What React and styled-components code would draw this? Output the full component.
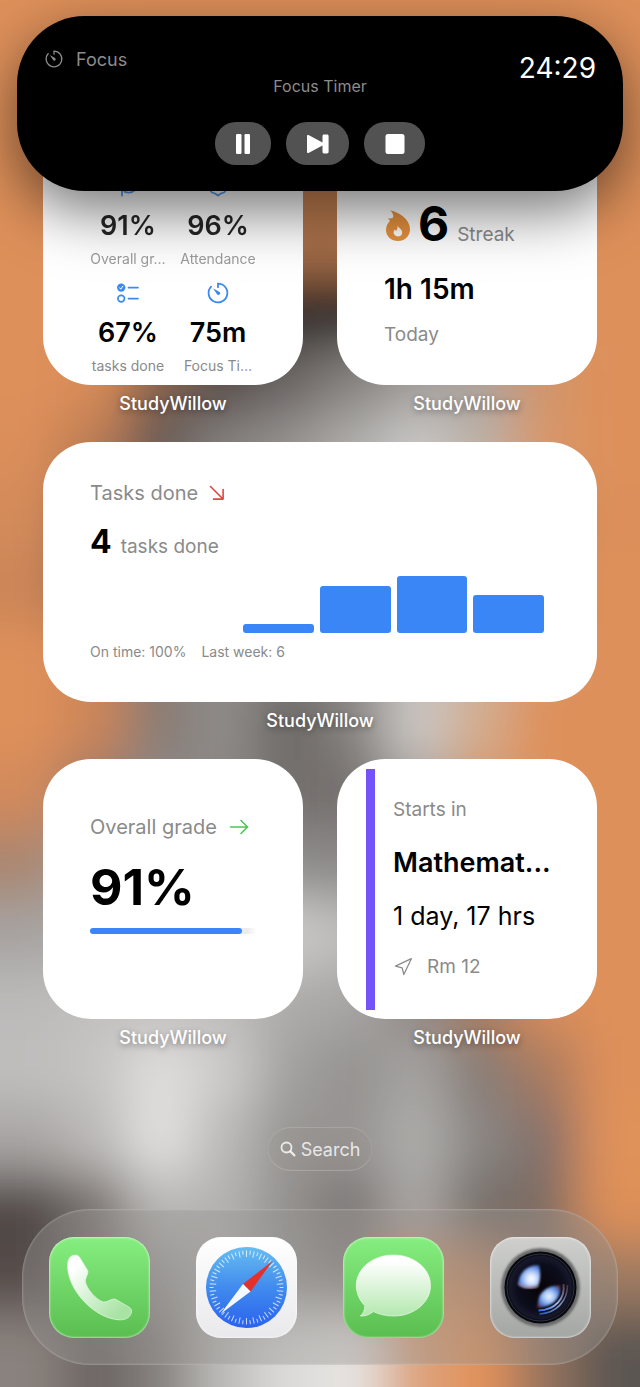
import React from 'react'
import styled, { createGlobalStyle } from 'styled-components'
import { Navigation } from 'lucide-react'

const GlobalStyle = createGlobalStyle`
  * {
    box-sizing: border-box;
  }
  body {
    margin: 0;
    background-color: #de905a;
    font-family: Inter, 'Liberation Sans', sans-serif;
  }
  button {
    font-family: inherit;
    border: none;
    padding: 0;
    cursor: pointer;
  }
  p, h1, h2 {
    margin: 0;
    font-weight: 400;
  }
`

/* ---------- wallpaper ---------- */

const WallpaperSvg = styled.svg`
  position: absolute;
  z-index: -1;
  top: 0;
  left: 0;
  width: 100%;
  height: 100%;
`

const O = '#de905a'

// coarse colour mesh, ten cells a row, from y = 208 down
const mesh = [
  [O, O, O, O, '#a87049', '#a87049', O, O, O, O],
  [O, O, O, '#6b5040', '#2c2725', '#2c2725', '#6b5a50', O, O, O],
  [O, '#d88c58', '#7d5f4e', '#544c49', '#6a6563', '#85827f', '#a19e9c', '#a8a19b', '#d0956a', O],
  ['#da8e5a', '#b87a54', '#645a55', '#85817f', '#969391', '#b0aeac', '#cbc9c7', '#bdb2a8', '#d8976a', O],
  ['#d48b5a', '#6d564a', '#77716e', '#8f8c8a', '#969391', '#a9a6a4', '#bdbab7', '#b5a090', '#c98a5c', '#dc8f5a'],
  ['#cb8558', '#735a4c', '#77716e', '#8f8c8a', '#8a8785', '#a9a6a4', '#bdbab7', '#b5a090', '#d48c5a', '#de905a'],
  [O, '#cd8658', '#857a73', '#8f8c8a', '#7a7674', '#8c8987', '#c3c0bd', '#c9b09c', '#da9260', O],
  [O, '#cb8558', '#887b73', '#8f8c8a', '#6c6765', '#85827f', '#cbc8c5', '#d3ac8c', O, O],
  ['#d28a5c', '#94786a', '#8c8987', '#8a8785', '#726e6c', '#74706e', '#a19e9c', '#d39a72', O, O],
  ['#a98670', '#a5a2a0', '#a5a2a0', '#9a9796', '#8f8d8c', '#8a8785', '#a8a6a5', '#c89a78', O, O],
  ['#a5a2a0', '#b0aeac', '#bcbab9', '#c5c4c3', '#cccbca', '#bdbcbb', '#a8a6a4', '#b08c74', O, O],
  ['#bcbab9', '#c2c0bf', '#c0bebd', '#bcbbba', '#adabaa', '#a8a6a5', '#8d8581', '#a87a5c', '#d88e5c', O],
  ['#c0bebd', '#c6c4c3', '#dfdedd', '#cdcccb', '#a3a1a0', '#949290', '#a5a3a1', '#857c76', '#a87a5e', O],
  ['#a9a6a4', '#bcb9b8', '#e2e1e0', '#bbb9b8', '#979492', '#969392', '#afadab', '#8a8683', '#82706a', '#e0925a'],
  ['#4f4744', '#77716e', '#b9b7b5', '#b4b2b1', '#93908e', '#7a7674', '#a9a6a4', '#736d69', '#7c6c62', '#de9058'],
  ['#544c49', '#77716e', '#9d9a98', '#b4b2b1', '#9a9795', '#8c8784', '#d0956a', '#c08a66', '#827066', '#9c7a62'],
  ['#8a827e', '#6b6460', '#85817f', '#bdbbb9', '#dddbd9', '#e6e4e2', '#dba27a', '#e3935a', '#94735f', '#5c5653'],
]

const Wallpaper = () => (
  <WallpaperSvg viewBox="0 0 640 1387" preserveAspectRatio="none" aria-hidden="true">
    <defs>
      <filter id="soft" filterUnits="userSpaceOnUse" x="-200" y="0" width="1040" height="1700">
        <feGaussianBlur stdDeviation="25" />
      </filter>
    </defs>
    <rect width="640" height="1387" fill={O} />
    <g filter="url(#soft)">
      {mesh.map((row, r) =>
        row.map((fill, c) => (
          <rect
            key={`${r}-${c}`}
            x={c === 0 ? -130 : c * 64}
            y={208 + r * 69}
            width={c === 0 || c === 9 ? 195 : 65}
            height={r === mesh.length - 1 ? 200 : 70}
            fill={fill}
          />
        ))
      )}
    </g>
  </WallpaperSvg>
)

/* ---------- icons ---------- */

const TimerIcon = ({ size = 24, width = 1.8 }) => (
  <svg width={size} height={size} viewBox="0 0 24 24" fill="none" stroke="currentColor" strokeWidth={width} strokeLinecap="round">
    <path d="M12 6.2V2.600a9.400 9.400 0 1 1-6.900 3" />
    <path d="M7 7.200l6.100 3.500a1.700 1.700 0 1 1-2.300 2.300z" fill="currentColor" stroke="none" />
  </svg>
)

const ChecklistIcon = () => (
  <svg width="24" height="24" viewBox="0 0 24 24" fill="none" stroke="currentColor" strokeWidth="1.7" strokeLinecap="round">
    <circle cx="5.2" cy="6.6" r="4.2" fill="currentColor" stroke="none" />
    <path d="M3.6 6.8l1.200 1.400 2-3" stroke="#fff" strokeWidth="1" />
    <circle cx="5.2" cy="17.6" r="3.3" />
    <path d="M12.500 6.600h9.500M12.500 17.600h9.500" />
  </svg>
)

const CapIcon = () => (
  <svg width="24" height="24" viewBox="0 0 24 24" fill="none" stroke="currentColor" strokeWidth="1.8" strokeLinecap="round" strokeLinejoin="round">
    <path d="M12 3l11 5-11 6L1 8zM6 11v10.500M8.500 17.600c3 1.400 7 1.300 10-1.100v-5" />
  </svg>
)

const SealIcon = () => (
  <svg width="24" height="24" viewBox="0 0 24 24" fill="none" stroke="currentColor" strokeWidth="1.8" strokeLinecap="round" strokeLinejoin="round">
    <path d="M12 2l3 1.500 4 .5 1.500 4L22 12l-1.500 3.500L18 18.500 15 19.500 12 21.500 9 19.500 6 18.500 3.500 15.500 2 12l1.500-4L5 4l4-.5z" />
    <path d="M8 12l3 3 5-6" />
  </svg>
)

const FlameIcon = () => (
  <svg width="26" height="31" viewBox="-2 0 26 31">
    <path
      d="M4.300.6C13 2 24 9.500 24 19.200 24 26.200 18.600 31 12 31S0 26.400 0 20c0-4 1.800-6.800 4-9.200L1.600 8.200c2 .4 4 .2 5.600-.8C7.600 5 6.600 2.600 4.300.6z"
      fill="#e8923e"
    />
    <path d="M11.600 15.600c.4 2.200 4.600 3.600 4.600 6.900 0 2.500-1.900 4-4.300 4s-4.300-1.600-4.300-3.900c0-1.400.6-2.400 1.200-3.200.5.8 1 1.200 1.600 1.400.8-1.500 1.300-3.300 1.200-5.200z" fill="#fff" />
  </svg>
)

const TrendDown = () => (
  <svg width="16" height="16" viewBox="0 0 16 16" fill="none" stroke="#e5443f" strokeWidth="1.6" strokeLinecap="round" strokeLinejoin="round">
    <path d="M1.500 1.500l12.500 12.500M14.100 4.500v9.600H4.500" />
  </svg>
)

const TrendFlat = () => (
  <svg width="20" height="16" viewBox="0 0 20 16" fill="none" stroke="#52c455" strokeWidth="1.6" strokeLinecap="round" strokeLinejoin="round">
    <path d="M1.500 8h16.800M12 1.500L18.500 8 12 14.500" />
  </svg>
)

const PauseIcon = () => (
  <svg width="16" height="20" viewBox="0 0 16 20" fill="#fff">
    <rect x="1" width="5.500" height="20" rx="1.200" />
    <rect x="9.500" width="5.500" height="20" rx="1.200" />
  </svg>
)

const SkipIcon = () => (
  <svg width="24" height="20" viewBox="0 0 24 20" fill="#fff">
    <path d="M1 2.200C1 .9 2 .6 3 1.200L16.500 8.600V2.200C16.500 1.200 17 .6 18 .6H21c1 0 1.600.6 1.600 1.600v15.600c0 1-.6 1.600-1.600 1.600h-3c-1 0-1.500-.6-1.500-1.600v-6.400L3 18.800c-1 .6-2 .3-2-1z" />
  </svg>
)

const StopIcon = () => (
  <svg width="20" height="20" viewBox="0 0 20 20" fill="#fff">
    <rect x=".5" width="19" height="20" rx="2.500" />
  </svg>
)

const SearchIcon = () => (
  <svg width="16" height="16" viewBox="0 0 16 16" fill="none" stroke="currentColor" strokeWidth="1.800" strokeLinecap="round">
    <circle cx="6.500" cy="6.500" r="5" />
    <path d="M10.400 10.400l4 4" strokeWidth="2.200" />
  </svg>
)

/* ---------- live activity ---------- */

const Island = styled.section`
  position: absolute;
  z-index: 2;
  top: 16px;
  left: 17px;
  right: 17px;
  padding: 32px 27px 26px;
  border-radius: 68px;
  background-color: #000;
  color: #8c8c8c;
  box-shadow: 0 20px 60px rgba(0, 0, 0, 0.55);
`
const IslandHeader = styled.header`
  display: grid;
  grid-template-columns: 1fr auto 1fr;
  height: 48px;
`
const Activity = styled.p`
  display: flex;
  align-items: center;
  gap: 12px;
  height: 22px;
  font-size: 18px;
`
const ActivityTitle = styled.h1`
  align-self: end;
  font-size: 16px;
  line-height: 20px;
`
const Clock = styled.time`
  justify-self: end;
  color: #fff;
  font-size: 28px;
  line-height: 40px;
`
const Controls = styled.div`
  display: flex;
  justify-content: center;
  gap: 15px;
  margin-top: 26px;
`
const ControlButton = styled.button`
  display: flex;
  align-items: center;
  justify-content: center;
  width: ${(props) => props.$width}px;
  height: 43px;
  border-radius: 21px;
  background-color: #525252;
`

/* ---------- widgets ---------- */

const Screen = styled.main`
  position: relative;
  z-index: 0;
  display: flex;
  flex-direction: column;
  min-height: 100vh;
  padding: 125px 22px 22px;
  overflow: hidden;
`
const Widgets = styled.div`
  display: grid;
  grid-template-columns: 1fr 1fr;
  gap: 27px 34px;
  padding: 0 21px;
`
const Slot = styled.article`
  grid-column: ${(props) => (props.$wide ? 'span 2' : 'auto')};
  min-width: 0;
`
const Card = styled.div`
  display: flex;
  flex-direction: column;
  height: 260px;
  padding: ${(props) => props.$pad};
  border-radius: 48px;
  background-color: #fff;
  color: #000;
`
const AppName = styled.p`
  margin-top: 8px;
  color: #fff;
  font-size: 18px;
  font-weight: 500;
  line-height: 22px;
  text-align: center;
  text-shadow: 0 2px 6px rgba(0, 0, 0, 0.4);
`
const Stats = styled.div`
  display: grid;
  grid-template-columns: 1fr 1fr;
  gap: 13px 14px;
`
const Stat = styled.div`
  display: flex;
  flex-direction: column;
  align-items: center;
  color: #3c8af0;
  white-space: nowrap;
  opacity: ${(props) => (props.$dim ? 0.85 : 1)};
`
const StatValue = styled.p`
  margin: 11px 0 7px;
  color: #000;
  font-size: 27px;
  font-weight: 600;
  line-height: 34px;
`
const Caption = styled.p`
  color: #8a8a8a;
  font-size: 14px;
  line-height: 18px;
`
const Line = styled.div`
  display: flex;
  align-items: ${(props) => props.$align || 'baseline'};
  gap: ${(props) => props.$gap}px;
`
const Muted = styled.p`
  color: #8a8a8a;
  font-size: ${(props) => props.$size || 19}px;
  line-height: 24px;
  white-space: nowrap;
`
const Strong = styled.p`
  font-size: ${(props) => props.$size}px;
  font-weight: ${(props) => props.$weight || 600};
  line-height: ${(props) => props.$line || 34}px;
  white-space: nowrap;
`
const StreakLine = styled(Line)`
  margin-bottom: 18px;
`
const DayTotal = styled(Strong)`
  margin-bottom: 17px;
`
const CountLine = styled(Line)`
  margin-top: 13px;
`
const Chart = styled.div`
  display: flex;
  align-items: flex-end;
  gap: 6px;
  height: 57px;
  margin: 10px 6px 10px 0;
`
const Bar = styled.div`
  flex: 1;
  border-radius: 3px;
  background-color: #3b86f7;
`
const GradeValue = styled(Strong)`
  margin: 18px 0 11px;
`
const Progress = styled.div`
  height: 6px;
  border-radius: 3px;
  background: linear-gradient(to right, #ececec 94%, #fff);
`
const ProgressFill = styled.div`
  height: 100%;
  border-radius: 3px;
  background-color: #3b86f7;
`
const Lesson = styled.div`
  display: flex;
  gap: 18px;
  height: 241px;
`
const SubjectMark = styled.div`
  flex: 0 0 9px;
  background-color: #7551f8;
`
const LessonInfo = styled.div`
  display: flex;
  flex-direction: column;
  padding-top: 29px;
`
const LessonName = styled(Strong)`
  margin: 24px 0 19px;
`
const Place = styled(Line)`
  margin-top: 22px;
  color: #8a8a8a;
`

const Widget = ({ wide, pad, children }) => (
  <Slot $wide={wide}>
    <Card $pad={pad}>{children}</Card>
    <AppName>StudyWillow</AppName>
  </Slot>
)

const stats = [
  { icon: <CapIcon />, value: '91%', label: 'Overall gr…', dim: true },
  { icon: <SealIcon />, value: '96%', label: 'Attendance', dim: true },
  { icon: <ChecklistIcon />, value: '67%', label: 'tasks done' },
  { icon: <TimerIcon />, value: '75m', label: 'Focus Ti…' },
]

const weeks = [0, 0, 1, 5, 6, 4]

/* ---------- search and dock ---------- */

const SearchButton = styled.button`
  display: flex;
  align-items: center;
  justify-content: center;
  align-self: center;
  gap: 5px;
  width: 104px;
  height: 44px;
  margin-top: 78px;
  border-radius: 22px;
  background-color: rgba(150, 145, 142, 0.2);
  box-shadow: inset 0 1px 1px rgba(255, 255, 255, 0.18), inset 0 -1px 1px rgba(255, 255, 255, 0.22);
  color: rgba(255, 255, 255, 0.8);
  font-size: 18px;
`
const Dock = styled.nav`
  display: flex;
  justify-content: space-between;
  margin-top: 38px;
  padding: 28px 27px 27px;
  border-radius: 68px;
  background-color: rgba(150, 147, 145, 0.4);
  box-shadow: inset 0 0 2px 1px rgba(255, 255, 255, 0.22);
`
const AppButton = styled.button`
  width: 101px;
  height: 101px;
  overflow: hidden;
  border-radius: 25px;
  background: ${(props) => props.$fill};
  box-shadow: inset 0 0 2px 1px rgba(255, 255, 255, 0.5);

  svg {
    display: block;
  }
`

const PhoneGlyph = () => (
  <svg width="101" height="101" viewBox="0 0 101 101">
    <defs>
      <linearGradient id="handset" x1="0" y1="0" x2="1" y2="1">
        <stop offset=".15" stopColor="#fff" />
        <stop offset=".85" stopColor="#a9e3a4" />
      </linearGradient>
    </defs>
    <path
      d="M18.600 30c-.3-5 1-9.500 4.400-11.200 2.600-1.200 5.600-1 7.400 1.200l8.200 13.400c1.400 3.200-2.400 6.400-2.200 11 .3 6.200 11.400 19.400 18.200 20.600 4.200.4 8.400-4.200 12.200-2.600l13.600 8c3 2 2.600 5.600.6 8.200-2.400 3.400-6.400 4.400-11 4.200C45.500 81.400 19.600 54 18.600 30z"
      fill="url(#handset)"
      stroke="#e6fbe4"
      strokeOpacity=".7"
    />
  </svg>
)

const CompassGlyph = () => (
  <svg width="101" height="101" viewBox="0 0 101 101">
    <defs>
      <linearGradient id="dial" x1="0" y1="0" x2="0" y2="1">
        <stop offset="0" stopColor="#66bdf0" />
        <stop offset=".5" stopColor="#418bee" />
        <stop offset="1" stopColor="#2a62ee" />
      </linearGradient>
    </defs>
    <circle cx="50.500" cy="50.500" r="40.500" fill="url(#dial)" />
    {Array.from({ length: 60 }, (_, i) => (
      <path
        key={i}
        d={i % 2 ? 'M50.500 13.500v4' : 'M50.500 13.500v6.500'}
        stroke="#fff"
        strokeOpacity=".75"
        transform={`rotate(${i * 6} 50.500 50.500)`}
      />
    ))}
    <path d="M76.500 24L47 47l7.500 7.500z" fill="#e5312c" />
    <path d="M24.500 77L47 47l7.500 7.500z" fill="#f4f8ff" />
  </svg>
)

const BubbleGlyph = () => (
  <svg width="101" height="101" viewBox="0 0 101 101">
    <defs>
      <linearGradient id="bubble" x1="0" y1="0" x2="0" y2="1">
        <stop offset=".1" stopColor="#fff" />
        <stop offset="1" stopColor="#b4e8af" />
      </linearGradient>
    </defs>
    <path
      d="M50.400 18C71 18 87.500 31.500 87.500 48.500S71 79 50.400 79c-7.400 0-14-1.600-20-4.400C26.500 77.500 22 79.500 17.400 79c3-2.600 4.600-6.200 4.400-10.400C16.500 63.200 13.300 56.200 13.300 48.500 13.300 31.500 29.800 18 50.400 18z"
      fill="url(#bubble)"
      stroke="#effcee"
      strokeOpacity=".7"
    />
  </svg>
)

const LensGlyph = () => (
  <svg width="101" height="101" viewBox="0 0 101 101">
    <defs>
      <radialGradient id="glass">
        <stop offset="0" stopColor="#080507" />
        <stop offset=".7" stopColor="#0c0d1c" />
        <stop offset=".92" stopColor="#17192b" />
        <stop offset="1" stopColor="#05060c" />
      </radialGradient>
      <radialGradient id="glintTop" cx=".6" cy=".6" r=".65">
        <stop offset="0" stopColor="#fff" />
        <stop offset=".35" stopColor="#cfe0ff" />
        <stop offset=".75" stopColor="#6e97e6" />
        <stop offset="1" stopColor="#3557a8" />
      </radialGradient>
      <radialGradient id="glintLow" cx=".5" cy=".5" r=".6">
        <stop offset="0" stopColor="#f0f4ff" />
        <stop offset=".4" stopColor="#a6c6f8" />
        <stop offset=".8" stopColor="#4a78d0" />
        <stop offset="1" stopColor="#6a3a44" />
      </radialGradient>
      <linearGradient id="ring" x1="0" y1="1" x2="1" y2="0">
        <stop offset="0" stopColor="#2f6ae0" />
        <stop offset=".5" stopColor="#9fb8ec" />
        <stop offset="1" stopColor="#5a3a44" />
      </linearGradient>
      <filter id="glow" x="-30%" y="-30%" width="160%" height="160%">
        <feGaussianBlur stdDeviation="1" />
      </filter>
    </defs>
    <circle cx="50.500" cy="50.500" r="39.500" fill="#6a6b6a" filter="url(#glow)" />
    <circle cx="50.500" cy="50.500" r="36" fill="#06070c" />
    <circle cx="50.500" cy="50.500" r="33.500" fill="url(#glass)" stroke="#3a3d4c" strokeWidth=".8" />
    <path d="M49 28C38 28 30 34 28 46.500c3 5 13 6 20 2.500 2.500-5 3-13 1-21z" fill="url(#glintTop)" filter="url(#glow)" />
    <path d="M28.500 46.500c4 4 13 5 19.500 2.500" fill="none" stroke="#b98a90" strokeWidth="1.600" filter="url(#glow)" />
    <path d="M70 48.500c2 12-7 22-22.500 22 .5-6 1-12 5-15.500 4-4 9-7 17.500-6.500z" fill="url(#glintLow)" filter="url(#glow)" />
    <path d="M73.500 47c2 14-8 26-25 26.500" fill="none" stroke="url(#ring)" strokeWidth="2" />
    <path d="M77.500 48c0 16-11 28-28 29" fill="none" stroke="url(#ring)" strokeWidth="1.600" strokeOpacity=".8" />
  </svg>
)

const green = 'linear-gradient(#86ee80, #5abd50)'

const apps = [
  { name: 'Phone', fill: green, glyph: <PhoneGlyph /> },
  { name: 'Safari', fill: 'linear-gradient(#fff, #e9e9ec)', glyph: <CompassGlyph /> },
  { name: 'Messages', fill: green, glyph: <BubbleGlyph /> },
  { name: 'Camera', fill: 'linear-gradient(#cfd0ce, #a4a6a4)', glyph: <LensGlyph /> },
]

const App = () => {
  return (
    <Screen>
      <GlobalStyle />
      <Wallpaper />
      <Island>
        <IslandHeader>
          <Activity>
            <TimerIcon size={20} width={1.5} />
            Focus
          </Activity>
          <ActivityTitle>Focus Timer</ActivityTitle>
          <Clock>24:29</Clock>
        </IslandHeader>
        <Controls>
          <ControlButton $width={56} aria-label="Pause">
            <PauseIcon />
          </ControlButton>
          <ControlButton $width={63} aria-label="Skip">
            <SkipIcon />
          </ControlButton>
          <ControlButton $width={61} aria-label="Stop">
            <StopIcon />
          </ControlButton>
        </Controls>
      </Island>

      <Widgets>
        <Widget pad="49px 47px 0">
          <Stats>
            {stats.map((stat) => (
              <Stat key={stat.label} $dim={stat.dim}>
                {stat.icon}
                <StatValue>{stat.value}</StatValue>
                <Caption>{stat.label}</Caption>
              </Stat>
            ))}
          </Stats>
        </Widget>

        <Widget pad="69px 47px 0">
          <StreakLine $gap={8}>
            <FlameIcon />
            <Strong $size={48} $weight={700} $line={60}>6</Strong>
            <Muted>Streak</Muted>
          </StreakLine>
          <DayTotal $size={28}>1h 15m</DayTotal>
          <Muted>Today</Muted>
        </Widget>

        <Widget wide pad="39px 47px 0">
          <Line $gap={11} $align="center">
            <Muted $size={20}>Tasks done</Muted>
            <TrendDown />
          </Line>
          <CountLine $gap={9}>
            <Strong $size={32} $weight={700} $line={48}>4</Strong>
            <Muted>tasks done</Muted>
          </CountLine>
          <Chart>
            {weeks.map((count, i) => (
              <Bar key={i} style={{ height: `${(count / 6) * 100}%` }} />
            ))}
          </Chart>
          <Line $gap={15}>
            <Caption>On time: 100%</Caption>
            <Caption>Last week: 6</Caption>
          </Line>
        </Widget>

        <Widget pad="56px 46px 0 47px">
          <Line $gap={12} $align="center">
            <Muted $size={20}>Overall grade</Muted>
            <TrendFlat />
          </Line>
          <GradeValue $size={50} $weight={700} $line={60}>91%</GradeValue>
          <Progress>
            <ProgressFill style={{ width: '91%' }} />
          </Progress>
        </Widget>

        <Widget pad="10px 29px 0">
          <Lesson>
            <SubjectMark />
            <LessonInfo>
              <Muted>Starts in</Muted>
              <LessonName $size={27}>Mathemat...</LessonName>
              <Strong $size={25} $weight={400}>1 day, 17 hrs</Strong>
              <Place $gap={14} $align="center">
                <Navigation size={20} strokeWidth={1.5} />
                <Muted>Rm 12</Muted>
              </Place>
            </LessonInfo>
          </Lesson>
        </Widget>
      </Widgets>

      <SearchButton>
        <SearchIcon />
        Search
      </SearchButton>

      <Dock>
        {apps.map((app) => (
          <AppButton key={app.name} $fill={app.fill} aria-label={app.name}>
            {app.glyph}
          </AppButton>
        ))}
      </Dock>
    </Screen>
  )
}

export default App
